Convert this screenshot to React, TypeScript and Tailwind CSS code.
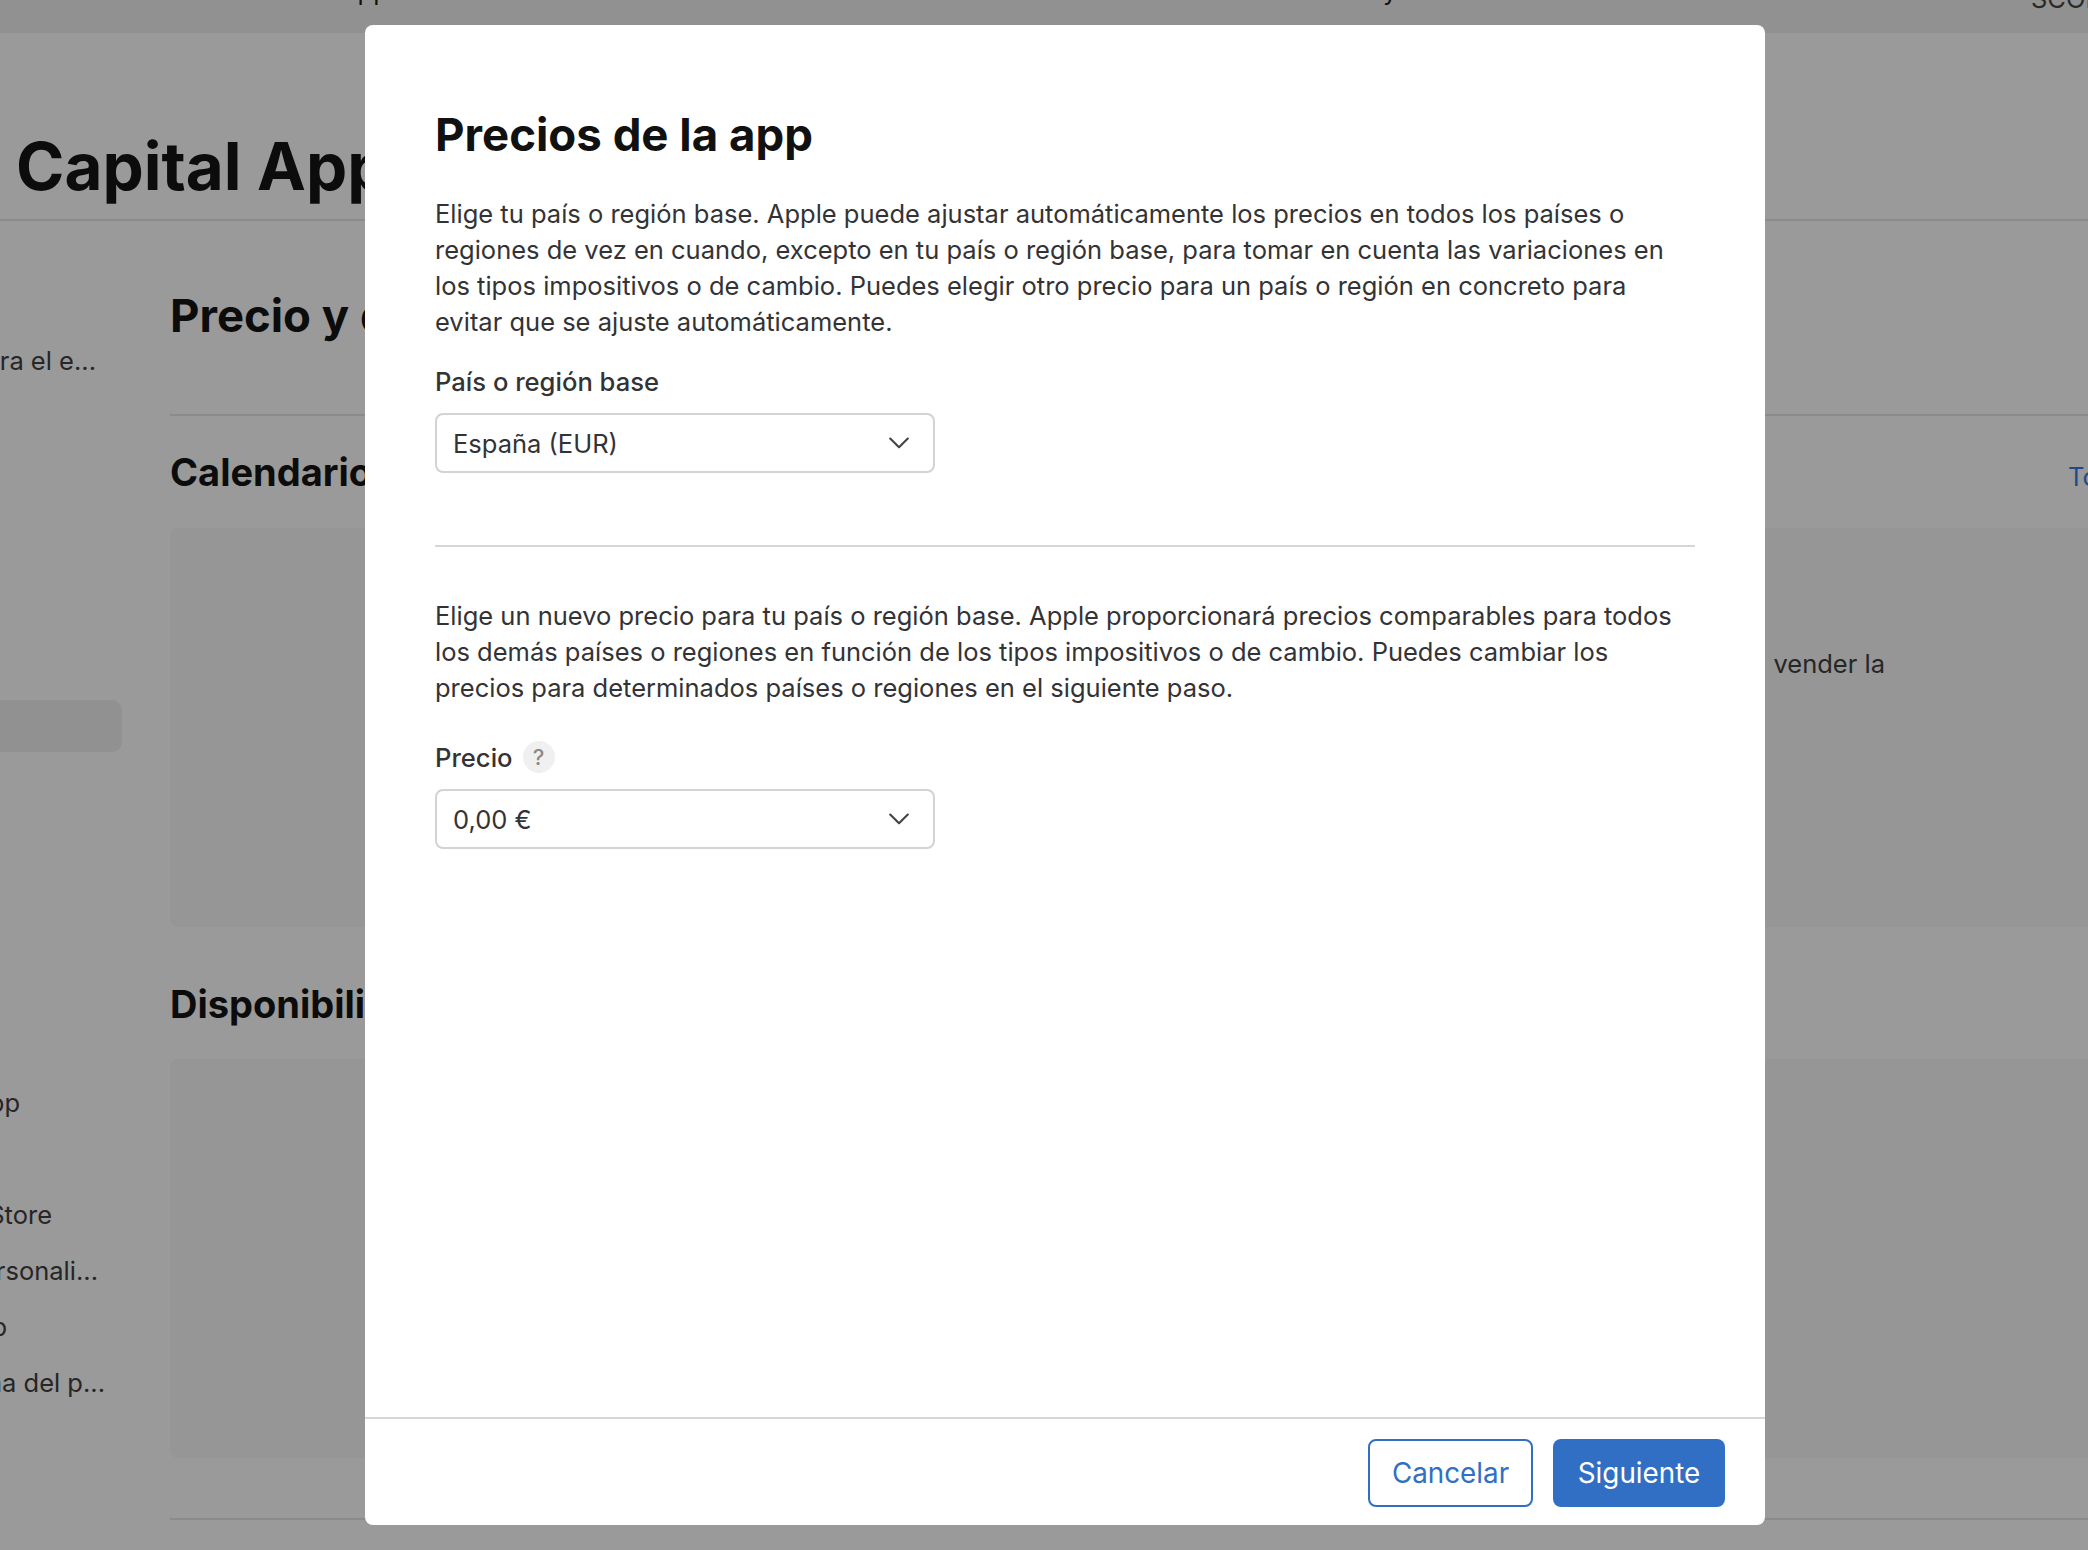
import React from "react";

const font = { fontFamily: "Inter, 'Liberation Sans', sans-serif" };

function Chevron() {
  return (
    <svg width="20" height="12" viewBox="0 0 20 12" fill="none" className="shrink-0">
      <path d="M1.2 1.5 L10 10.3 L18.8 1.5" stroke="#444444" strokeWidth="2.1" strokeLinecap="round" strokeLinejoin="round" />
    </svg>
  );
}

function Select({ value }: { value: string }) {
  return (
    <div className="flex h-[60px] w-[500px] items-center justify-between rounded-[8px] border-2 border-[#d3d3d3] bg-white pl-[16px] pr-[24px] text-[25.5px] text-[#333336]">
      <span className="pt-[2px]">{value}</span>
      <Chevron />
    </div>
  );
}

function SideItem({ text, w, className = "" }: { text: string; w: string; className?: string }) {
  return (
    <div className={`flex h-[56px] items-center justify-end whitespace-nowrap text-[25.5px] text-[#262626] ${w} ${className}`}>
      <span className="shrink-0">{text}</span>
    </div>
  );
}

export default function App() {
  return (
    <div className="relative h-[1550px] w-[2088px] overflow-hidden bg-[#9a9a9a]" style={font}>
      {/* Dimmed page behind the dialog */}
      <header className="flex h-[33px] items-start overflow-hidden bg-[#919191] text-[25.5px] leading-[36px] text-[#111111]">
        <div className="-mt-[27px] ml-[340px] flex whitespace-nowrap">
          <span className="w-[215px]">App</span>
          <span className="w-[228px]">Datos</span>
          <span className="w-[292px]">Distribución</span>
          <span className="w-[210px]">Ofertas</span>
          <span className="w-[378px]">Calidad y acceso</span>
          <span className="w-[368px]">Estado</span>
        </div>
        <span className="-mt-[19px] whitespace-nowrap text-[#2a2a2a]">SCORE</span>
      </header>

      <div className="flex h-[188px] items-start border-b-2 border-[#8b8b8b] pl-[16px] pt-[100px]">
        <h1 className="whitespace-nowrap text-[65.5px] font-bold leading-[68px] text-[#0c0c0c]">Capital App</h1>
      </div>

      <div className="flex">
        <aside className="w-[170px] shrink-0">
          <SideItem text="Datos para el e..." w="w-[96px]" className="mt-[112px]" />
          <div className="mt-[311px] h-[52px] w-[122px] rounded-r-[10px] bg-[#919191]" />
          <SideItem text="Información de la app" w="w-[20px]" className="mt-[323px]" />
          <SideItem text="App Store" w="w-[52px]" className="mt-[56px]" />
          <SideItem text="Páginas personali..." w="w-[98px]" />
          <SideItem text="In-App" w="w-[7px]" />
          <SideItem text="Programa del p..." w="w-[105px]" />
        </aside>

        <main className="w-[2000px] shrink-0">
          <h2 className="flex h-[195px] items-start border-b-2 border-[#8b8b8b] pt-[66px] text-[45.5px] font-bold leading-[58px] whitespace-nowrap text-[#0c0c0c]">
            Precio y disponibilidad
          </h2>
          <div className="flex h-[112px] items-start whitespace-nowrap pt-[33px]">
            <h3 className="w-[1898px] shrink-0 text-[38px] font-bold leading-[46px] text-[#0c0c0c]">Calendario de precios</h3>
            <span className="mt-[10px] text-[25.5px] leading-[36px] text-[#1f4a8a]">Todos</span>
          </div>
          <div className="flex h-[399px] rounded-[8px] bg-[#969696] text-[25.5px] leading-[36px] text-[#262626]">
            <div className="flex h-fit w-[1715px] justify-end whitespace-nowrap pt-[118px]">
              <span className="shrink-0">para vender la</span>
            </div>
          </div>
          <h3 className="h-[132px] whitespace-nowrap pt-[54px] text-[38px] font-bold leading-[46px] text-[#0c0c0c]">Disponibilidad</h3>
          <div className="h-[399px] rounded-[8px] bg-[#969696]" />
          <div className="mt-[60px] border-b-2 border-[#8b8b8b]" />
        </main>
      </div>

      {/* Dialog */}
      <div className="absolute left-[365px] top-[25px] flex h-[1500px] w-[1400px] flex-col rounded-[8px] bg-white">
        <div className="flex-1 pl-[70px] pr-[70px]">
          <h1 className="pt-[82px] text-[45.6px] font-bold leading-[56px] text-[#111111]">Precios de la app</h1>
          <p className="mt-[33px] text-[25.5px] leading-[36px] text-[#333336]">
            Elige tu país o región base. Apple puede ajustar automáticamente los precios en todos los países o regiones de vez en cuando, excepto en tu país o región base, para tomar en cuenta las variaciones en los tipos impositivos o de cambio. Puedes elegir otro precio para un país o región en concreto para evitar que se ajuste automáticamente.
          </p>
          <div className="mt-[24px] text-[25.6px] font-medium leading-[36px] text-[#333336]">País o región base</div>
          <div className="mt-[13px]"><Select value="España (EUR)" /></div>
          <div className="mt-[72px] h-[2px] bg-[#d6d6d6]" />
          <p className="mt-[51px] text-[25.5px] leading-[36px] text-[#333336]">
            Elige un nuevo precio para tu país o región base. Apple proporcionará precios comparables para todos los demás países o regiones en función de los tipos impositivos o de cambio. Puedes cambiar los precios para determinados países o regiones en el siguiente paso.
          </p>
          <div className="mt-[33px] flex h-[36px] items-center gap-[10px] text-[25.6px] font-medium text-[#333336]">
            <span className="pt-[2px]">Precio</span>
            <span className="flex h-[32px] w-[32px] items-center justify-center rounded-full bg-[#f0f0f0] text-[22px] text-[#8a8a8a]">?</span>
          </div>
          <div className="mt-[14px]"><Select value="0,00 €" /></div>
        </div>
        <footer className="flex h-[108px] items-start justify-end gap-[20px] border-t-2 border-[#d6d6d6] pr-[40px] pt-[20px] text-[27.8px]">
          <button className="h-[68px] w-[165px] rounded-[8px] border-2 border-[#316fc4] bg-white pt-[2px] text-[#316fc4]">Cancelar</button>
          <button className="h-[68px] w-[172px] rounded-[8px] bg-[#316fc4] pt-[2px] text-white">Siguiente</button>
        </footer>
      </div>
    </div>
  );
}
